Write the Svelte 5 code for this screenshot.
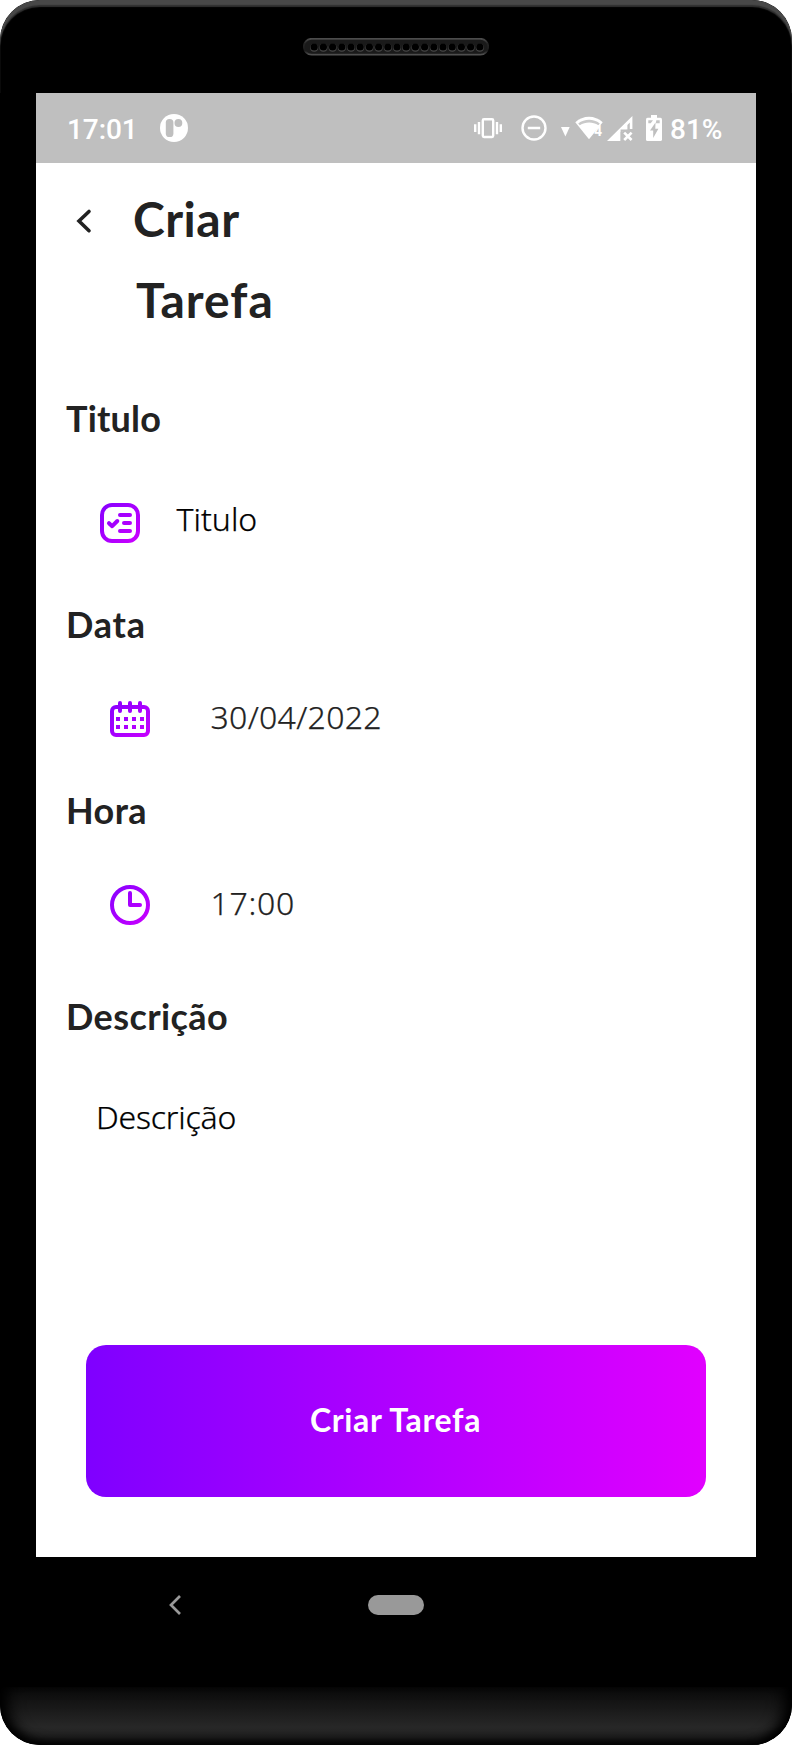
<script>
  const holes = Array.from({ length: 19 }, (_, i) => 11.2 + i * 9.2);
</script>

<div class="phone">
  <div class="top">
    <svg class="speaker" width="186" height="18" viewBox="0 0 186 18">
      <defs>
        <linearGradient id="rim" x1="0" y1="0" x2="0" y2="1">
          <stop offset="0" stop-color="#4c4c4c" /><stop offset=".3" stop-color="#242424" />
          <stop offset=".75" stop-color="#1b1b1b" /><stop offset="1" stop-color="#505050" />
        </linearGradient>
      </defs>
      <rect x=".8" y=".8" width="184.4" height="15.8" rx="7.9" fill="#1a1a1a" stroke="url(#rim)" stroke-width="1.8" />
      {#each holes as x}
        <circle cx={x} cy="9.8" r="4" fill="#464646" />
        <circle cx={x} cy="9" r="3.6" fill="#000" />
      {/each}
    </svg>
  </div>

  <main class="screen">
    <div class="status">
      <span class="time">17:01</span>
      <svg class="app" width="28" height="28" viewBox="0 0 28 28">
        <circle cx="14" cy="14" r="14" fill="#fff" />
        <rect x="5.8" y="5" width="7.6" height="18" rx="3.6" fill="#bfbfbf" />
        <circle cx="18.4" cy="9" r="3.9" fill="#bfbfbf" />
      </svg>

      <svg class="vibrate" width="28" height="28" viewBox="0 0 28 28" fill="none" stroke="#fff" stroke-width="2.4">
        <rect x="8.8" y="5.2" width="10.4" height="17.8" rx="1.2" />
        <path d="M1.2 10.3v7.6M5 8v12.2M23 8v12.2M26.8 10.3v7.6" />
      </svg>
      <svg class="dnd" width="26" height="28" viewBox="0 0 26 28" fill="none" stroke="#fff" stroke-width="2.4">
        <circle cx="13" cy="14" r="11.5" /><path d="M6.8 14h12.4" stroke-width="2.6" />
      </svg>
      <svg class="arrow" width="9" height="28" viewBox="0 0 9 28"><path d="M0 13h8.7L4.4 22.5z" fill="#fff" /></svg>
      <svg class="wifi" width="28" height="28" viewBox="0 0 28 28">
        <path d="M.3 8.2C8 .8 20 .8 27.7 8.2L14 25.3z" fill="#fff" />
        <path d="M3.2 9.4C9.6 4.6 18.6 4.6 24.8 9.4l-1.4 1.8c-5.6-3.6-13-3.6-18.6 0z" fill="#c9c9c9" />
        <path d="M19.4 18.5V24H28V11.5h-3.2z" fill="#bfbfbf" />
        <text x="19" y="22.2" font-size="14">4</text>
      </svg>
      <svg class="signal" width="26" height="28" viewBox="0 0 26 28">
        <path d="M0 27L25.4 2v13h-2.6V8.600L20.400 11v4.500L13.600 18v9z" fill="#fff" />
        <path d="M20.400 11v4.500h-6.800V27h2V17h4.800z" fill="#bfbfbf" />
        <path d="M17.2 18.6l7.4 7.4M24.6 18.6L17.2 26" stroke="#fff" stroke-width="2.6" />
      </svg>
      <svg class="battery" width="16" height="28" viewBox="0 0 16 28">
        <path d="M5 1h6v3H5z" fill="#fff" />
        <rect y="3.800" width="16" height="23.200" rx="1.600" fill="#fff" />
        <path d="M2.300 6.200h4.700L4.700 9.200H2.300zM10.300 6.200h3.400v3h-3.900z" fill="#c4c4c4" />
        <path d="M9.500 8.500L4 16.500h3.200V24l5.200-9.300H9.300z" fill="#bfbfbf" />
      </svg>
      <span class="percent">81%</span>
    </div>

    <header>
      <svg width="16" height="26" viewBox="0 0 16 26"><path d="M13 3.500L3 13l10 9.700" fill="none" stroke="#222" stroke-width="3.600" stroke-linecap="round" /></svg>
      <h1><span class="first">Criar</span><span class="second">Tarefa</span></h1>
    </header>

    <section class="field title-field">
      <h2>Titulo</h2>
      <div class="row">
        <svg width="40" height="40" viewBox="0 0 40 40" fill="none" stroke="url(#violet)" stroke-width="4" stroke-linecap="round" stroke-linejoin="round">
          <defs>
            <linearGradient id="violet" gradientUnits="userSpaceOnUse" x1="0" y1="0" x2="40" y2="40">
              <stop offset="0" stop-color="#8500ff" /><stop offset="1" stop-color="#cd00ff" />
            </linearGradient>
          </defs>
          <rect x="2" y="2" width="36" height="36" rx="10" />
          <path d="M20 12h10M24 20h6M20 28h10M9 20.200l3.200 3L17.300 18" />
        </svg>
        <span class="value placeholder">Titulo</span>
      </div>
    </section>

    <section class="field date-field">
      <h2>Data</h2>
      <div class="row picker">
        <svg width="40" height="40" viewBox="0 0 40 40" fill="none" stroke="url(#violet)">
          <rect x="2" y="6" width="36" height="28" rx="4" stroke-width="4" />
          <path d="M10 2v8M20 2v8M30 2v8" stroke-width="4" stroke-linecap="round" />
          <path d="M6 18.010L34 18M6 26.010L34 26" stroke-width="4" stroke-dasharray="4 4" />
        </svg>
        <span class="value date">30/04/2022</span>
      </div>
    </section>

    <section class="field hour-field">
      <h2>Hora</h2>
      <div class="row picker">
        <svg width="40" height="40" viewBox="0 0 40 40" fill="none" stroke="url(#violet)" stroke-width="4">
          <circle cx="20" cy="20" r="18" /><path d="M20 8v12h10" stroke-linecap="round" stroke-linejoin="round" />
        </svg>
        <span class="value hour">17:00</span>
      </div>
    </section>

    <section class="field text-field">
      <h2>Descrição</h2>
      <div class="row"><span class="value placeholder">Descrição</span></div>
    </section>

    <button>Criar Tarefa</button>
  </main>

  <nav>
    <svg width="12" height="20" viewBox="0 0 12 20"><path d="M11 1L2 10l9 9" fill="none" stroke="#999" stroke-width="2.700" /></svg>
    <i class="home"></i>
  </nav>
  <div class="chin"></div>
</div>

<style>
  :global(body) { background: #fff; }
  .phone {
    box-sizing: border-box; width: 792px; height: 1745px; overflow: hidden;
    display: flex; flex-direction: column; background: #000; border-radius: 40px;
  }
  .top {
    box-sizing: border-box; height: 93px; flex: none; display: flex; justify-content: center;
    padding-top: 38px; border-radius: 40px 40px 0 0;
    box-shadow: inset 0 5px 1px #484848, inset 0 7px 1px #303030;
  }
  .screen {
    flex: none; height: 1464px; margin: 0 36px; background: #fff;
    display: flex; flex-direction: column;
  }
  .status {
    box-sizing: border-box; height: 70px; flex: none; display: flex; align-items: center;
    padding: 0 34px 0 31px; background: #bfbfbf; color: #fff;
    font: 500 28px/32px Roboto, sans-serif;
  }
  .status svg { flex: none; }
  .time { width: 67px; letter-spacing: -.1px; padding-top: 4px; }
  .app { margin-left: 26px; }
  .vibrate { margin-left: 285.500px; }
  .dnd { margin-left: 19px; }
  .arrow { margin-left: 14.500px; }
  .wifi { margin-left: 5px; }
  .wifi text { font: 700 14px Roboto, sans-serif; fill: #fff; }
  .signal { margin-left: 3.500px; }
  .battery { margin-left: 13.500px; }
  .percent { margin-left: 8px; padding-top: 4px; }
  header {
    height: 218px; flex: none; box-sizing: border-box; display: flex; align-items: flex-start;
    padding: 15px 0 0 39.500px; font-family: Lato, sans-serif; color: #222;
  }
  header svg { margin-top: 30px; }
  h1 { margin: 0 0 0 41.500px; display: flex; flex-direction: column; font-size: 48px; font-weight: 700; line-height: 81px; }
  .first { letter-spacing: .5px; }
  .second { margin-left: 3px; letter-spacing: 1px; }
  .field { flex: none; padding-left: 30px; }
  h2 { position: relative; top: 1px; margin: 0; font: 700 36px/44px Lato, sans-serif; letter-spacing: .4px; color: #222; }
  .title-field { margin-top: 13px; height: 207px; }
  .date-field { height: 186px; }
  .hour-field { height: 206px; }
  .text-field { height: 352px; }
  .title-field h2 { top: 2px; letter-spacing: .2px; }
  .date-field h2 { letter-spacing: .8px; }
  .row { display: flex; align-items: flex-start; margin-top: 59px; padding-left: 34px; }
  .row svg { flex: none; margin-top: 6px; }
  .picker { margin-top: 50px; padding-left: 44px; }
  .hour-field svg { margin-top: 4px; }
  .value {
    margin-left: 60.500px; font: 300 32px/43px "Noto Sans", sans-serif; color: #222;
    -webkit-text-stroke: .25px currentColor;
  }
  .title-field .value { margin-left: 36.500px; }
  .text-field .row { margin-top: 58px; padding-left: 30px; }
  .text-field .value { margin-left: 0; letter-spacing: -.2px; }
  .placeholder { color: #000; }
  .date { letter-spacing: .300px; }
  .hour { letter-spacing: .700px; }
  button {
    flex: none; align-self: center; width: 620px; height: 152px; border: 0; border-radius: 20px;
    padding: 0 1px 2px 0; background: linear-gradient(90deg, #7f00ff, #e100ff); color: #fff;
    font: 700 32px/38px Lato, sans-serif; letter-spacing: .650px;
  }
  nav { box-sizing: border-box; flex: none; height: 130px; display: flex; align-items: flex-start; padding: 38px 0 0 168.500px; }
  .home { width: 56px; height: 20px; border-radius: 10px; background: #999; margin-left: 187.500px; }
  .chin {
    flex: 1; border-radius: 0 0 40px 40px;
    background: linear-gradient(#0b0b0b, #181818 35%, #272727 68%, #242424);
    box-shadow: inset 14px 0 16px -6px #000, inset -14px 0 16px -6px #000, inset 0 -5px 10px #000;
  }
</style>
